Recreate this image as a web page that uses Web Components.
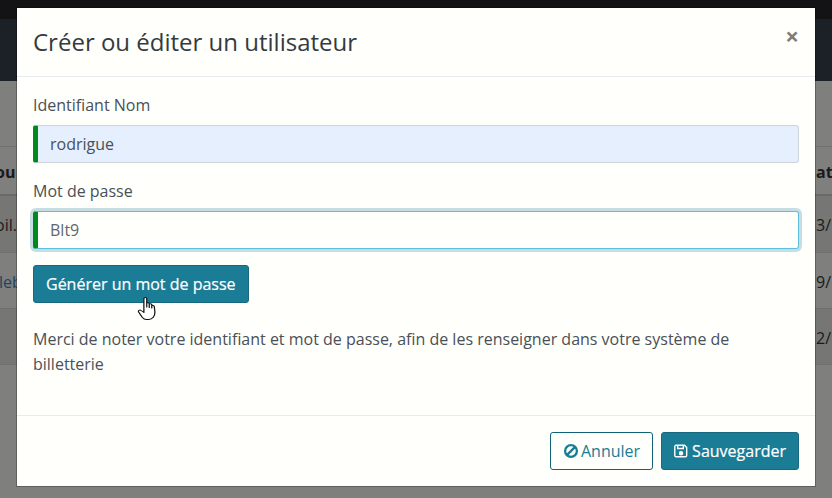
<!DOCTYPE html>
<html lang="fr">
<head>
<meta charset="utf-8">
<title>Utilisateur</title>
<style>
    html, body { margin: 0; height: 100%; overflow: hidden; }
    body { font-family: "Open Sans", sans-serif; font-size: 16px; color: #495057; }
</style>
</head>
<body>
<page-backdrop></page-backdrop>
<user-modal heading="Créer ou éditer un utilisateur">
    <form-field label="Identifiant Nom" value="rodrigue" kind="filled"></form-field>
    <form-field label="Mot de passe" value="Blt9" kind="focus"></form-field>
    <action-button variant="solid">Générer un mot de passe</action-button>
    <p>Merci de noter votre identifiant et mot de passe, afin de les renseigner dans votre système de billetterie</p>
    <action-button slot="footer" variant="outline" icon="ban">Annuler</action-button>
    <action-button slot="footer" variant="solid" icon="save">Sauvegarder</action-button>
</user-modal>
<cursor-hand></cursor-hand>

<script>
class PageBackdrop extends HTMLElement {
    constructor() {
        super();
        this.attachShadow({ mode: "open" });
    }

    connectedCallback() {
        this.shadowRoot.innerHTML = `
            <style>
                :host { display: flex; flex-direction: column; height: 498px; background: #7f7f7e; color: #1a1a1a; font-size: 16px; overflow: hidden; }
                .top { height: 19px; background: #131316; flex: none; }
                .nav { height: 62px; background: #1b2126; flex: none; }
                .gap { height: 66px; flex: none; box-sizing: border-box; border-bottom: 1px solid #707070; }
                .row { height: 56px; flex: none; display: flex; justify-content: space-between; align-items: center; box-sizing: border-box; padding-top: 2px; border-bottom: 1px solid #6f6f6f; white-space: nowrap; }
                .row.head { height: 49px; font-weight: 700; border-bottom: 2px solid #6a6a6c; }
                .row.tall { height: 57px; }
                .row.odd { background: #767675; }
                .l { width: 17px; }
                .l span { display: inline-block; }
                .r { width: 16px; }
                .link { color: #24435c; }
            </style>
            <div class="top"></div>
            <div class="nav"></div>
            <div class="gap"></div>
            <div class="row head"><span class="l"><span style="margin-left:-5px">ou</span></span><span class="r">ati</span></div>
            <div class="row tall odd"><span class="l"><span style="margin-left:-5px">oil.</span></span><span class="r">3/</span></div>
            <div class="row"><span class="l link"><span style="margin-left:-1px">leb</span></span><span class="r">9/</span></div>
            <div class="row odd"><span class="l"></span><span class="r">2/</span></div>
        `;
    }
}

class UserModal extends HTMLElement {
    constructor() {
        super();
        this.attachShadow({ mode: "open" });
    }

    connectedCallback() {
        this.shadowRoot.innerHTML = `
            <style>
                :host { display: flex; flex-direction: column; position: absolute; left: 17px; top: 8px; width: 798px; height: 478px; box-sizing: border-box; background: #fffffc; color: #495057; box-shadow: 0 0 0 1px rgba(0,0,0,.25); }
                header { display: flex; justify-content: space-between; align-items: flex-start; height: 69px; box-sizing: border-box; padding: 16px 16px 0; border-bottom: 1px solid #e9ecef; flex: none; }
                h5 { margin: 0; font-size: 24px; line-height: 36px; font-weight: 400; color: #343a40; }
                .close { font-size: 24px; line-height: 24px; font-weight: 700; color: #7d7d7d; }
                main { flex: 1; padding: 16px 16px 0; }
                footer { display: flex; justify-content: flex-end; gap: 8px; height: 71px; box-sizing: border-box; padding: 16px 16px 0; border-top: 1px solid #e9ecef; flex: none; }
                ::slotted(p) { margin: 24px 0 0; line-height: 25px; font-size: 16px; }
            </style>
            <header>
                <h5>${this.getAttribute("heading")}</h5>
                <span class="close">×</span>
            </header>
            <main><slot></slot></main>
            <footer><slot name="footer"></slot></footer>
        `;
    }
}

class FormField extends HTMLElement {
    constructor() {
        super();
        this.attachShadow({ mode: "open" });
    }

    connectedCallback() {
        const kind = this.getAttribute("kind");
        this.shadowRoot.innerHTML = `
            <style>
                :host { display: block; margin-bottom: 16px; }
                label { display: block; line-height: 24px; margin-bottom: 8px; }
                .input { height: 38px; box-sizing: border-box; padding: 0 12px; line-height: 36px; border: 1px solid #ced4da; border-left: 5px solid #008a1e; border-radius: 3px; }
                .filled { background: #e6effd; color: #495057; }
                .focus { background: #fffffc; border-color: #5bc0de; border-left-color: #008a1e; box-shadow: 0 0 0 3px rgba(27,124,150,.25); color: #5f666d; }
            </style>
            <label>${this.getAttribute("label")}</label>
            <div class="input ${kind}">${this.getAttribute("value")}</div>
        `;
    }
}

const ICONS = {
    ban: `<svg viewBox="0 0 16 16" width="16" height="16" fill="none" stroke="currentColor" stroke-width="2.3"><circle cx="8" cy="8" r="5.9"/><path d="M3.900 12.100 12.100 3.900"/></svg>`,
    save: `<svg viewBox="0 0 14 14" width="14" height="14" fill="none" stroke="currentColor" stroke-width="1.400" style="margin-right:2px"><path d="M2 1.300h8.500l2.200 2.200v8a1.200 1.200 0 0 1-1.200 1.200h-9.500a1.200 1.200 0 0 1-1.200-1.200v-9A1.200 1.200 0 0 1 2 1.300z"/><path d="M3.700 1.500v3h5.600v-3"/><circle cx="7" cy="9.200" r="1.500" fill="currentColor" stroke-width="1.500"/></svg>`
};

class ActionButton extends HTMLElement {
    constructor() {
        super();
        this.attachShadow({ mode: "open" });
    }

    connectedCallback() {
        const icon = ICONS[this.getAttribute("icon")] || "";
        this.shadowRoot.innerHTML = `
            <style>
                :host { display: inline-block; }
                button { display: flex; align-items: center; gap: 2px; height: 38px; box-sizing: border-box; padding: 0 12px; font: inherit; font-size: 16px; border-radius: 3px; cursor: pointer; }
                .solid { background: #1b7c96; border: 1px solid #17697f; color: #fff; font-weight: 500; -webkit-text-stroke: .2px #fff; }
                .outline { background: transparent; border: 1px solid #0f6378; color: #1b7c96; }
                svg { display: block; flex: none; }
            </style>
            <button class="${this.getAttribute("variant")}">${icon}<slot></slot></button>
        `;
    }
}

class CursorHand extends HTMLElement {
    constructor() {
        super();
        this.attachShadow({ mode: "open" });
    }

    connectedCallback() {
        this.shadowRoot.innerHTML = `
            <style>
                :host { display: block; position: absolute; left: 137px; top: 296px; width: 20px; height: 26px; }
                svg { display: block; }
            </style>
            <svg viewBox="0 0 16 26" width="20" height="26" preserveAspectRatio="none">
                <path fill="#fff" stroke="#111" stroke-width="1" stroke-linejoin="round" d="M5.500 2.500c0-1.500 2.300-1.500 2.300 0V11V7.500c0-1 2-1 2 .3V11.500V8.500c0-1 2-1 2 .3V12V10c0-1 2-.8 2 .5c.2 2 .5 4 .5 6c0 3.500-1.800 7-5 7H7.500c-1.500 0-2.500-1-3.200-2L1.300 16c-.8-1.500 1-2.500 2-1.500l2.200 2z"/>
            </svg>
        `;
    }
}

customElements.define("page-backdrop", PageBackdrop);
customElements.define("user-modal", UserModal);
customElements.define("form-field", FormField);
customElements.define("action-button", ActionButton);
customElements.define("cursor-hand", CursorHand);
</script>
</body>
</html>
